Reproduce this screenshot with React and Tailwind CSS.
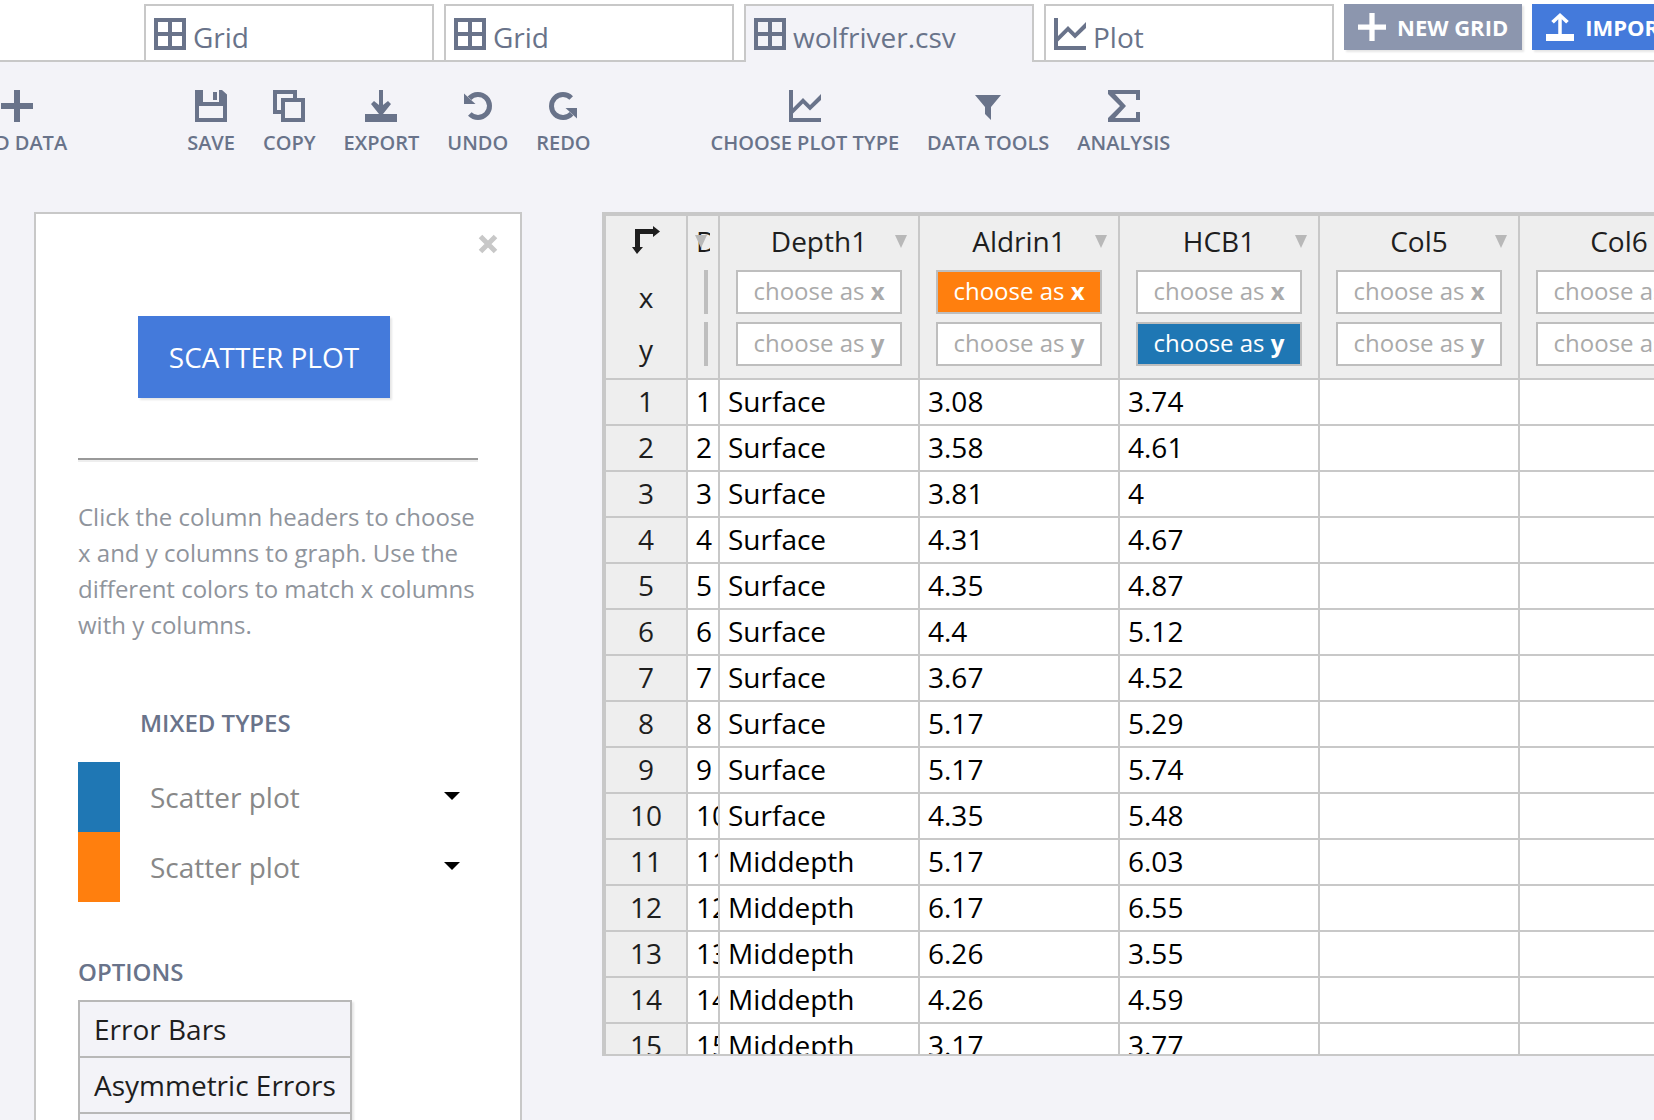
const TABS = [
  { name: 'Grid', icon: 'grid' },
  { name: 'Grid', icon: 'grid' },
  { name: 'wolfriver.csv', icon: 'grid', active: true },
  { name: 'Plot', icon: 'plot' },
]

const COLUMNS = [
  { name: 'Depth1' },
  { name: 'Aldrin1', x: true },
  { name: 'HCB1', y: true },
  { name: 'Col5' },
  { name: 'Col6' },
]

const ROWS = [
  ['Surface', '3.08', '3.74'],
  ['Surface', '3.58', '4.61'],
  ['Surface', '3.81', '4'],
  ['Surface', '4.31', '4.67'],
  ['Surface', '4.35', '4.87'],
  ['Surface', '4.4', '5.12'],
  ['Surface', '3.67', '4.52'],
  ['Surface', '5.17', '5.29'],
  ['Surface', '5.17', '5.74'],
  ['Surface', '4.35', '5.48'],
  ['Middepth', '5.17', '6.03'],
  ['Middepth', '6.17', '6.55'],
  ['Middepth', '6.26', '3.55'],
  ['Middepth', '4.26', '4.59'],
  ['Middepth', '3.17', '3.77'],
]

const turnArrow = (
  <>
    <path d="M7.500 8.300A11.500 11.500 0 1 1 7.800 24.100" fill="none" stroke="currentColor" strokeWidth="5" />
    <path d="M2 3.500L13.500 14H2z" />
  </>
)

const ICONS = {
  grid: <path fillRule="evenodd" d="M0 0h32v32H0zM4 4v10h10V4zM18 4v10h10V4zM4 18v10h10V18zM18 18v10h10V18z" />,
  plot: <path d="M0 0h4v18l10-10 7 7L32 4v6L21 20.500l-7-7L4 23.500V28h28v4H0z" />,
  plus: <path d="M13 0h6v13h13v6H19v13h-6V19H0v-6h13z" />,
  save: <path fillRule="evenodd" d="M0 0h8v12h16V0h3l5 4.500V32H0zM4 16v12h24V16zM18 2h4v8h-4z" />,
  copy: <path fillRule="evenodd" d="M0 0h24v8h8v24H8v-8H0zM4 4v16h4V8h12V4zM12 12v16h16V12z" />,
  export: <path d="M14 0h4v15l5-4 3 3-8 10h14v8H0v-8h14L6 14l3-3 5 4z" />,
  undo: turnArrow,
  redo: <g transform="rotate(180 16 16)">{turnArrow}</g>,
  filter: <path d="M3 5h26L19 17v13l-6-6v-7z" />,
  sigma: <path d="M0 0h32v10h-4V4H7l11 12L7 28h21v-6h4v10H0v-4l12-12L0 4z" />,
  upload: <path d="M14 7L9 12 6 9 16 0l10 9-3 3-5-5v17h14v8H0v-8h14z" />,
}

function Icon({ name, className = 'size-8' }) {
  return (
    <svg viewBox="0 0 32 32" className={`${className} shrink-0 fill-current`} aria-hidden="true">
      {ICONS[name]}
    </svg>
  )
}

function ToolButton({ icon, label }) {
  return (
    <button className="flex flex-col items-center gap-[7px] text-[20px] leading-7 font-semibold whitespace-nowrap">
      <Icon name={icon} />
      {label}
    </button>
  )
}

function TopBar() {
  return (
    <header className="flex h-[62px] gap-2.5 border-b-2 border-[#c8c8c8] bg-white pt-1 pl-36">
      <nav className="flex gap-2.5">
        {TABS.map((t, i) => (
          <button
            key={i}
            className={`flex w-[290px] shrink-0 items-start gap-[7px] border-2 border-b-0 border-[#c8c8c8] px-2 pt-3 ${t.active ? '-mb-0.5 bg-[#f3f3f8]' : 'bg-white'}`}
          >
            <Icon name={t.icon} />
            <span className="text-[28px] leading-[38px]">{t.name}</span>
          </button>
        ))}
      </nav>
      <button className="flex h-[46px] shrink-0 items-center gap-[11px] bg-[#8c96ae] px-3.5 text-[22px] font-bold whitespace-nowrap text-white shadow-[2px_2px_2px_rgba(0,0,0,0.1)]">
        <Icon name="plus" className="size-7" />
        NEW GRID
      </button>
      <button className="flex h-[46px] shrink-0 items-center gap-[11px] bg-[#447adb] px-3.5 text-[22px] font-bold whitespace-nowrap text-white shadow-[2px_2px_2px_rgba(0,0,0,0.1)]">
        <Icon name="upload" className="size-7" />
        IMPORT
      </button>
    </header>
  )
}

function Toolbar() {
  return (
    <div className="-ml-[33px] flex gap-[120px] pt-7">
      <ToolButton icon="plus" label="ADD DATA" />
      <div className="flex gap-7">
        <ToolButton icon="save" label="SAVE" />
        <ToolButton icon="copy" label="COPY" />
        <ToolButton icon="export" label="EXPORT" />
        <ToolButton icon="undo" label="UNDO" />
        <ToolButton icon="redo" label="REDO" />
      </div>
      <div className="flex gap-7">
        <ToolButton icon="plot" label="CHOOSE PLOT TYPE" />
        <ToolButton icon="filter" label="DATA TOOLS" />
        <ToolButton icon="sigma" label="ANALYSIS" />
      </div>
    </div>
  )
}

function TraceType({ id, swatch }) {
  return (
    <div className="flex h-[70px] items-center">
      <label htmlFor={id} className={`h-full w-[42px] ${swatch}`} />
      <div className="relative ml-[30px] flex-1">
        <select id={id} aria-label="Trace type" className="w-full appearance-none bg-transparent text-[28px] leading-10 text-[#888]">
          <option>Scatter plot</option>
        </select>
        <svg viewBox="0 0 16 8" className="pointer-events-none absolute top-[15px] right-[18px] h-2 w-4" aria-hidden="true">
          <path d="M0 0h16L8 8z" />
        </svg>
      </div>
    </div>
  )
}

function PlotPanel() {
  return (
    <aside className="relative w-[488px] shrink-0 border-2 border-b-0 border-[#c8c8c8] bg-white px-[42px] pt-[102px]">
      <button aria-label="Close" className="absolute top-5 right-[22px] text-[#c8c8c8]">
        <svg viewBox="0 0 20 20" className="size-5" aria-hidden="true">
          <path d="M2.500 2.500l15 15M17.500 2.500l-15 15" stroke="currentColor" strokeWidth="5" />
        </svg>
      </button>
      <button className="ml-[60px] block h-[82px] w-[252px] bg-[#447adb] text-[28px] font-medium text-white shadow-[2px_2px_2px_rgba(0,0,0,0.1)]">
        SCATTER PLOT
      </button>
      <hr className="mt-[60px] h-1 border-t-2 border-b-2 border-t-[#999] border-b-[#eee]" />
      <p className="mt-[37px] text-[24px] leading-9 text-[#8f949c]">
        Click the column headers to choose x and y columns to graph. Use the different colors to match x columns with y columns.
      </p>
      <h2 className="mt-[62px] ml-[62px] text-[24px] leading-9 font-semibold">MIXED TYPES</h2>
      <div className="mt-[21px]">
        <TraceType id="trace-1" swatch="bg-[#1f77b4]" />
        <TraceType id="trace-2" swatch="bg-[#ff7f0e]" />
      </div>
      <h2 className="mt-[52px] text-[24px] leading-9 font-semibold">OPTIONS</h2>
      <div className="mt-2.5 w-[274px] border-2 border-[#b8b8b8] text-[#1e1e1e] shadow-[2px_2px_2px_rgba(0,0,0,0.1)]">
        {['Error Bars', 'Asymmetric Errors', 'Subplots'].map(o => (
          <button key={o} className="block h-14 w-full border-b-2 border-[#b8b8b8] bg-[#f3f3f8] px-3.5 text-left text-[28px] whitespace-nowrap">
            {o}
          </button>
        ))}
      </div>
    </aside>
  )
}

function ChooseButton({ axis, active }) {
  return (
    <button className={`h-11 w-full border-2 border-[#bebebe] pb-0.5 text-[24px] leading-9 font-normal whitespace-nowrap ${active || 'bg-white text-[#aaa]'}`}>
      choose as <b>{axis}</b>
    </button>
  )
}

function Triangle({ className }) {
  return (
    <svg viewBox="0 0 12 13" className={`absolute top-[19px] h-[13px] w-3 fill-[#b8b8b8] ${className}`} aria-hidden="true">
      <path d="M0 0h12L6 13z" />
    </svg>
  )
}

function DataGrid() {
  const head = 'relative h-[164px] border-r-2 border-b-2 border-[#c8c8c8] bg-[#eee] p-0 align-top font-normal'
  const cell = 'h-[46px] overflow-hidden border-r-2 border-b-2 border-[#c8c8c8] bg-white p-0 pb-0.5 pl-2 whitespace-nowrap text-black'
  return (
    <div className="mb-16 min-w-0 flex-1 overflow-hidden border-4 border-r-0 border-b-2 border-[#c8c8c8]">
      <table className="w-[1114px] table-fixed border-separate border-spacing-0 text-[28px] leading-10 text-[#1e1e1e]">
        <colgroup>
          <col className="w-[82px]" />
          <col className="w-8" />
          {COLUMNS.map(c => <col key={c.name} className="w-[200px]" />)}
        </colgroup>
        <thead>
          <tr>
            <th className={head}>
              <svg viewBox="0 0 28 28" className="mx-auto mt-2.5 mb-[17px] size-7 fill-current" aria-hidden="true">
                <path d="M3 3h18V0l7 5.500-7 5.500V8H8v13h3l-6 7-5-7h3z" />
              </svg>
              <div className="leading-[52px]">x</div>
              <div className="leading-[52px]">y</div>
            </th>
            <th className={head}>
              <div className="mt-[5px] ml-2 w-3.5 overflow-hidden text-left">Date</div>
              <Triangle className="left-[7px]" />
              <div className="mt-[9px] ml-4 h-11 w-1 bg-[#bebebe]" />
              <div className="mt-2 ml-4 h-11 w-1 bg-[#bebebe]" />
            </th>
            {COLUMNS.map(c => (
              <th key={c.name} className={head}>
                <div className="mt-[5px]">{c.name}</div>
                <Triangle className="right-[11px]" />
                <div className="mt-[9px] flex flex-col gap-2 px-4">
                  <ChooseButton axis="x" active={c.x && 'bg-[#ff7f0e] text-white'} />
                  <ChooseButton axis="y" active={c.y && 'bg-[#1f77b4] text-white'} />
                </div>
              </th>
            ))}
          </tr>
        </thead>
        <tbody>
          {ROWS.map((r, i) => (
            <tr key={i}>
              <th className="h-[46px] border-r-2 border-b-2 border-[#c8c8c8] bg-[#eee] p-0 pb-0.5 font-normal">{i + 1}</th>
              <td className={cell}>{i + 1}</td>
              {COLUMNS.map((c, j) => <td key={c.name} className={cell}>{r[j]}</td>)}
            </tr>
          ))}
        </tbody>
      </table>
    </div>
  )
}

export default function App() {
  return (
    <div className="flex h-screen flex-col overflow-hidden bg-[#f3f3f8] font-['Open_Sans',sans-serif] text-[#69738a]">
      <TopBar />
      <Toolbar />
      <main className="mt-[55px] flex min-h-0 flex-1 gap-20 pl-[34px]">
        <PlotPanel />
        <DataGrid />
      </main>
    </div>
  )
}
